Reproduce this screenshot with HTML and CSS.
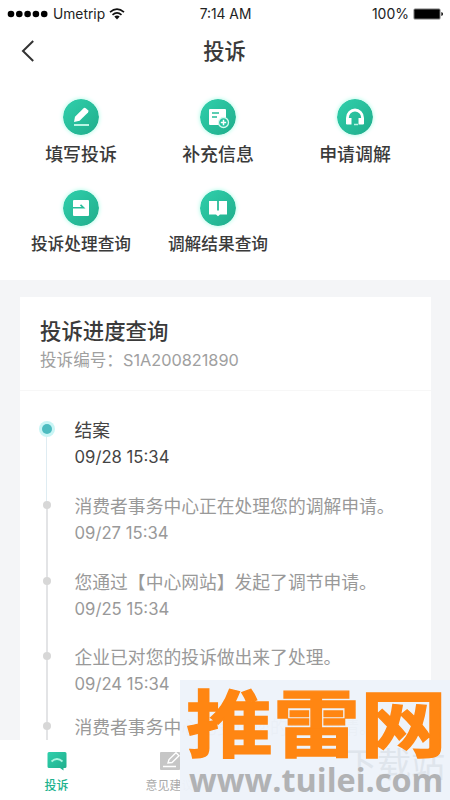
FILE: index.html
```html
<!DOCTYPE html>
<html lang="zh-CN">
<head>
<meta charset="utf-8">
<title>投诉</title>
<link rel="stylesheet" href="styles.css">
</head>
<body>
<svg class="defs" width="0" height="0"><defs>
<linearGradient id="teal" x1="0" y1="0" x2="1" y2="1"><stop offset="0" stop-color="#30d0ac"/><stop offset="1" stop-color="#1fad8b"/></linearGradient>
</defs></svg>
<div class="screen">
  <header class="status">
    <div class="carrier">
      <svg width="41" height="8" viewBox="0 0 41 8"><circle cx="4" cy="4" r="3.3"/><circle cx="12.3" cy="4" r="3.3"/><circle cx="20.6" cy="4" r="3.3"/><circle cx="28.9" cy="4" r="3.3"/><circle cx="37.2" cy="4" r="3.3"/></svg>
      <span class="carrier-name">Umetrip</span>
      <svg width="16" height="12" viewBox="0 0 16 12" fill="none" stroke="#111" stroke-width="1.7"><path d="M1 4.2Q8-1.8 15 4.2M3.5 6.8Q8 2.9 12.5 6.8"/><path d="M5.3 8.6Q8 6.4 10.7 8.6L8 11.4Z" fill="#111" stroke="none"/></svg>
    </div>
    <div class="clock">7:14 AM</div>
    <div class="power"><span>100%</span>
      <svg width="31" height="12" viewBox="0 0 31 12"><rect x=".5" y=".5" width="27" height="11" rx="1.5" fill="#777"/><rect x="1.5" y="1.5" width="25" height="9" rx=".7"/><path d="M28.4 4Q30 4.3 30 6T28.4 8Z"/></svg>
    </div>
  </header>
  <nav class="titlebar">
    <svg class="back" width="14" height="22" viewBox="0 0 14 22" fill="none" stroke="#333" stroke-width="2"><path d="M12.2 1L2 11L12.2 21"/></svg>
    <h1>投诉</h1>
  </nav>
  <section class="menu">
    <a class="entry">
      <svg class="disc" viewBox="0 0 36 36"><circle cx="18" cy="18" r="18" fill="url(#teal)"/><path d="M11 23L12 17.8L20.3 9.4Q21.5 8.3 22.8 9.3L25 11.3Q26 12.4 25 13.4L16.6 21.8Z" fill="#fff"/><path d="M11 26H26" stroke="#b9f4e3" stroke-width="2"/></svg>
      <span>填写投诉</span>
    </a>
    <a class="entry">
      <svg class="disc" viewBox="0 0 36 36"><circle cx="18" cy="18" r="18" fill="url(#teal)"/><rect x="9" y="10" width="17" height="16" rx="1" fill="#fff"/><path d="M12 14H19M12 18H17" stroke="#27bd99" stroke-width="1.4"/><circle cx="23.5" cy="23.5" r="5" fill="#28c3a0" stroke="#d5faef" stroke-width="1.3"/><path d="M20.8 23.5H26.2M23.5 20.8V26.2" stroke="#fff" stroke-width="1.5"/></svg>
      <span>补充信息</span>
    </a>
    <a class="entry">
      <svg class="disc" viewBox="0 0 36 36"><circle cx="18" cy="18" r="18" fill="url(#teal)"/><path d="M10.5 25V18.5a7.5 7.5 0 0 1 15 0V25" fill="none" stroke="#fff" stroke-width="2.8"/><path d="M9 19H14.5V25.5H10Q9 25.5 9 24.5ZM21.5 19H27V24.5Q27 25.5 26 25.5H21.5Z" fill="#fff"/><path d="M17 25.5H21" stroke="#b9f4e3" stroke-width="1.4"/></svg>
      <span>申请调解</span>
    </a>
    <a class="entry small">
      <svg class="disc" viewBox="0 0 36 36"><circle cx="18" cy="18" r="18" fill="url(#teal)"/><rect x="10" y="10" width="16" height="16" rx="1" fill="#fff"/><path d="M10 17.7H20.5L17.5 14.8" fill="none" stroke="#27bd99" stroke-width="1.6"/></svg>
      <span>投诉处理查询</span>
    </a>
    <a class="entry small">
      <svg class="disc" viewBox="0 0 36 36"><circle cx="18" cy="18" r="18" fill="url(#teal)"/><path d="M9 11H27V24.5H20L18 26.3L16 24.5H9Z" fill="#fff"/><path d="M18 10V20.5" stroke="#27bd99" stroke-width="1.8"/></svg>
      <span>调解结果查询</span>
    </a>
  </section>
  <main class="content">
    <article class="card">
      <div class="card-head">
        <h2>投诉进度查询</h2>
        <p><span>投诉编号：</span><span class="number">S1A200821890</span></p>
      </div>
      <ol class="timeline">
        <li class="current"><p>结案</p><time>09/28 15:34</time></li>
        <li><p>消费者事务中心正在处理您的调解申请。</p><time>09/27 15:34</time></li>
        <li><p>您通过【中心网站】发起了调节申请。</p><time>09/25 15:34</time></li>
        <li class="short"><p>企业已对您的投诉做出来了处理。</p><time>09/24 15:34</time></li>
        <li><p>消费者事务中心已受理您的投诉申请。</p></li>
      </ol>
    </article>
  </main>
  <footer class="tabs">
    <a class="tab active">
      <svg width="20" height="20" viewBox="0 0 20 20"><path d="M2 1H18Q19.5 1 19.5 2.5V15.5Q19.5 17 18 17H16.5V19.5L13 17H2Q.5 17 .5 15.5V2.5Q.5 1 2 1Z" fill="url(#teal)"/><path d="M4.5 10.5Q10 5.5 15.5 10.5" fill="none" stroke="#a9f5df" stroke-width="1.8"/></svg>
      <span>投诉</span>
    </a>
    <a class="tab">
      <svg width="20" height="20" viewBox="0 0 20 20"><rect y="1" width="20" height="18" rx="1" fill="#c6c6c6"/><path d="M8 12L9 8.5L16 1.8L19 4.8L12 11.5ZM3 15.5H16" fill="none" stroke="#fff" stroke-width="1.4"/></svg>
      <span>意见建议</span>
    </a>
  </footer>
  <aside class="watermark">
    <div class="ghost">下载站</div>
    <div class="brand">推雷网</div>
    <div class="site">www.tuilei.com</div>
  </aside>
</div>
</body>
</html>
```
FILE: styles.css
```css
* { box-sizing: border-box; }
body, h1, h2, p, ol { margin: 0; padding: 0; }
body {
  width: 450px;
  height: 800px;
  overflow: hidden;
  background: #fff;
  color: #3a3a3a;
  font-family: Inter, "Noto Sans CJK SC", sans-serif;
}
.defs { position: absolute; }
svg { display: block; flex: none; }
.screen {
  position: relative;
  width: 450px;
  height: 800px;
  display: flex;
  flex-direction: column;
  overflow: hidden;
}
.status {
  height: 26px;
  flex: none;
  display: grid;
  grid-template-columns: 1fr auto 1fr;
  padding: 0 6px 0 7px;
  font-size: 13.5px;
  line-height: 26px;
  color: #222;
}
.carrier, .power { display: flex; align-items: center; }
.carrier-name { margin: 0 4px 0 5px; font-size: 13.8px; }
.clock { padding: 1px 0 0; font-size: 13.8px; }
.power { justify-content: flex-end; gap: 4px; font-size: 14px; }
.titlebar {
  height: 54px;
  flex: none;
  display: grid;
  grid-template-columns: 1fr auto 1fr;
  align-items: center;
  padding: 0 1px 4px 0;
}
.back { margin-left: 21px; }
h1 { font-size: 21.3px; line-height: 32px; font-weight: 500; }
.menu {
  height: 200px;
  flex: none;
  display: grid;
  grid-template-columns: repeat(3, 137px);
  grid-template-rows: 91px 91px;
  padding: 19px 0 0 12.5px;
}
.entry { display: flex; flex-direction: column; align-items: center; }
.disc {
  width: 36px;
  height: 36px;
  border-radius: 50%;
  box-shadow: 0 0 4px #a4fbe5;
}
.entry span {
  margin-top: 6px;
  font-size: 17.9px;
  line-height: 27px;
  font-weight: 500;
  white-space: nowrap;
}
.entry.small span { font-size: 16.7px; margin-top: 5px; }
.content {
  height: 460px;
  flex: none;
  padding: 17px 19px 0 20px;
  background: #f4f5f7;
  overflow: hidden;
}
.card { height: 443px; background: #fff; overflow: hidden; }
.card-head {
  height: 94px;
  padding: 19px 20px 0;
  border-bottom: 1px solid #f7f7f7;
}
h2 { font-size: 21.4px; line-height: 30px; font-weight: 500; }
.card-head p {
  display: flex;
  font-size: 16.6px;
  line-height: 28px;
  color: #a0a0a0;
}
.number { font-size: 16.3px; }
.timeline { list-style: none; padding: 26px 0 0 22px; }
.timeline li {
  position: relative;
  height: 75.8px;
  padding-left: 32.5px;
  color: #999;
}
.timeline .short { height: 69.5px; }
.timeline li::before {
  content: "";
  position: absolute;
  left: 4px;
  top: 12px;
  width: 2px;
  height: 76px;
  background: #e3e4e6;
}
.timeline li::after {
  content: "";
  position: absolute;
  left: 1px;
  top: 8px;
  width: 8px;
  height: 8px;
  border-radius: 50%;
  background: #d7d7d7;
}
.timeline .current { color: #444; }
.timeline .current::before { background: #dfecf2; width: 1px; }
.timeline .current::after {
  left: 0;
  top: 7px;
  width: 10px;
  height: 10px;
  background: #4dbcc0;
  box-shadow: 0 0 0 3px #c9f5f5;
}
.timeline p { font-size: 17.8px; line-height: 28px; white-space: nowrap; }
.timeline time { display: block; font-size: 16.7px; line-height: 25px; }
.tabs {
  height: 60px;
  flex: none;
  display: flex;
  padding-top: 11px;
  background: #fff;
}
.tab {
  width: 113px;
  display: flex;
  flex-direction: column;
  align-items: center;
  font-size: 12px;
  line-height: 18px;
  color: #aaa;
}
.tab span { margin-top: 6px; }
.tab.active { color: #20b28d; font-weight: 500; }
.watermark {
  position: absolute;
  left: 180px;
  top: 680px;
  width: 270px;
  height: 120px;
  background: rgba(237, 242, 250, .96);
  font-family: "Noto Sans CJK SC", sans-serif;
  white-space: nowrap;
}
.ghost {
  position: absolute;
  right: 5px;
  top: 61px;
  font-size: 34px;
  line-height: 44px;
  color: #dfe5ec;
}
.brand {
  position: absolute;
  left: 6px;
  top: -11px;
  font-size: 87px;
  line-height: 100px;
  font-weight: 700;
  color: #ff8612;
  -webkit-text-stroke: 1.5px #ff8612;
  transform: scaleY(.84);
}
.site {
  position: absolute;
  left: 9px;
  top: 81px;
  font-family: "Open Sans", sans-serif;
  font-size: 32.4px;
  line-height: 36px;
  font-weight: 700;
  color: #b1b2b4;
}
```
